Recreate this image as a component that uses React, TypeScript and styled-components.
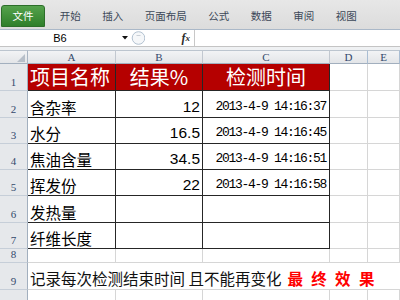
import React from 'react';
import styled, { createGlobalStyle } from 'styled-components';

const CJK = `"Noto Sans CJK SC", "Noto Sans", sans-serif`;

const GlobalStyle = createGlobalStyle`
  *, *::before, *::after { box-sizing: border-box; }
  html, body { margin: 0; padding: 0; background: #fff; }
  body { width: 400px; height: 300px; overflow: hidden; }
  #root { width: 400px; height: 300px; }
`;

const Frame = styled.div`
  width: 400px;
  height: 300px;
  display: flex;
  flex-direction: column;
  overflow: hidden;
  background: #fff;
`;

const Ribbon = styled.div`
  height: 30px;
  flex: none;
  display: flex;
  align-items: flex-end;
  padding: 0 0 2px 1px;
  background: linear-gradient(#e7e7e7, #dcdcdc);
  border-bottom: 1px solid #aab8c8;
`;

const FileTab = styled.div`
  width: 44px;
  height: 22px;
  margin-right: 4px;
  display: flex;
  align-items: center;
  justify-content: center;
  border: 1px solid #2c6e29;
  border-radius: 3px 3px 0 0;
  background: linear-gradient(#55a24c, #2f7f2b);
  color: #fff;
  font: 10.5px/1 ${CJK};
`;

const Tab = styled.div`
  height: 22px;
  padding: 0 10.75px;
  display: flex;
  align-items: center;
  color: #3c4858;
  font: 10.5px/1 ${CJK};
  white-space: nowrap;
`;

const FormulaBar = styled.div`
  height: 17px;
  flex: none;
  display: flex;
  align-items: center;
  background: #fff;
  border-bottom: 1px solid #c4c4c4;
`;

const NameBox = styled.div`
  width: 120px;
  text-align: center;
  font: 11px/16px "Liberation Sans", Arial, sans-serif;
  color: #000;
`;

const DropSlot = styled.div`
  width: 10px;
  height: 16px;
  display: flex;
  align-items: center;
  justify-content: center;
`;

const Toggle = styled.div`
  width: 14px;
  height: 16px;
  margin-left: 1px;
  display: flex;
  align-items: center;
`;

const FxSlot = styled.div`
  width: 49px;
  height: 16px;
  padding-right: 4px;
  display: flex;
  align-items: center;
  justify-content: flex-end;
  font: italic bold 12px/16px "Liberation Serif", "Times New Roman", serif;
  color: #2b2b2b;
`;

const FxSub = styled.span`
  font-size: 9px;
`;

const FormulaInput = styled.div`
  flex: 1;
  height: 16px;
  border-left: 1px solid #c8c8c8;
`;

const Spacer = styled.div`
  height: 3px;
  flex: none;
  background: #eff1f3;
`;

const Sheet = styled.div`
  flex: 1;
  display: grid;
  grid-template-columns: 28px 88px 87px 127px 38px 32px;
  grid-template-rows: 14px 27px 27px 26px 26px 26px 27px 26px 14px 27px 27px;
  overflow: hidden;
`;

const Corner = styled.div`
  display: flex;
  align-items: flex-end;
  justify-content: flex-end;
  padding: 0 2px 1px 0;
  background: linear-gradient(#f2f3f5, #e3e5e8);
  border-top: 1px solid #bcc5cf;
  border-right: 1px solid #a9b5c3;
  border-bottom: 1px solid #a2afbe;
`;

const ColHead = styled.div<{ $blue?: boolean }>`
  display: flex;
  align-items: center;
  justify-content: center;
  background: linear-gradient(#f2f3f5, #e3e5e8);
  border-top: 1px solid #bcc5cf;
  border-right: 1px solid ${(p) => (p.$blue ? '#a9bdd3' : '#c2c8d0')};
  border-bottom: 1px solid #a2afbe;
  font: 11px/12px "Liberation Serif", "Times New Roman", serif;
  color: #33496b;
`;

const RowHead = styled.div`
  display: flex;
  align-items: flex-end;
  justify-content: center;
  padding-bottom: 2px;
  background: #e6e8eb;
  border-right: 1px solid #a2afbe;
  border-bottom: 1px solid #c6ced8;
  font: 11px/12px "Liberation Serif", "Times New Roman", serif;
  color: #33496b;
`;

type Kind = 'title' | 'table' | 'grid';
type Align = 'left' | 'center' | 'right';

const Cell = styled.div<{ $kind: Kind; $align?: Align }>`
  display: flex;
  align-items: ${(p) => (p.$kind === 'title' ? 'center' : 'flex-end')};
  justify-content: ${(p) =>
    p.$align === 'right' ? 'flex-end' : p.$align === 'center' ? 'center' : 'flex-start'};
  padding: 0 2px ${(p) => (p.$kind === 'title' ? '0' : '2px')} 2px;
  white-space: nowrap;
  background: ${(p) => (p.$kind === 'title' ? '#b50000' : '#fff')};
  color: ${(p) => (p.$kind === 'title' ? '#fff' : '#000')};
  border-right: 1px solid ${(p) => (p.$kind === 'grid' ? '#d6d6d6' : '#262626')};
  border-bottom: 1px solid ${(p) => (p.$kind === 'grid' ? '#d6d6d6' : '#262626')};
  font-family: ${CJK};
  font-size: ${(p) => (p.$kind === 'title' ? '20px' : '15.5px')};
  line-height: ${(p) => (p.$kind === 'title' ? '26px' : '16px')};
`;

const NoteCell = styled.div`
  grid-column: 2 / span 5;
  display: flex;
  align-items: flex-end;
  padding: 0 0 3px 2px;
  white-space: nowrap;
  overflow: hidden;
  border-bottom: 1px solid #d6d6d6;
  color: #111;
  font: 15.5px/16px ${CJK};
`;

const Emph = styled.span`
  margin-left: 6px;
  color: #ff0000;
  font-weight: 700;
  letter-spacing: 2.4px;
`;

const Num = styled.span`
  font-family: "Liberation Sans", Arial, sans-serif;
  font-size: 15.5px;
`;

const Stamp = styled.span`
  font-family: "Liberation Mono", "Courier New", monospace;
  font-size: 13px;
  letter-spacing: -1.3px;
  margin-right: 1px;
`;

const tabs = ['开始', '插入', '页面布局', '公式', '数据', '审阅', '视图'];
const cols = ['A', 'B', 'C', 'D', 'E'];

const data: { name: string; value?: string; time?: string }[] = [
  { name: '含杂率', value: '12', time: '2013-4-9 14:16:37' },
  { name: '水分', value: '16.5', time: '2013-4-9 14:16:45' },
  { name: '焦油含量', value: '34.5', time: '2013-4-9 14:16:51' },
  { name: '挥发份', value: '22', time: '2013-4-9 14:16:58' },
  { name: '发热量' },
  { name: '纤维长度' },
];

const GridRest = () => (
  <>
    <Cell $kind="grid" />
    <Cell $kind="grid" />
  </>
);

export default function App() {
  return (
    <Frame>
      <GlobalStyle />
      <Ribbon>
        <FileTab>文件</FileTab>
        {tabs.map((t) => (
          <Tab key={t}>{t}</Tab>
        ))}
      </Ribbon>
      <FormulaBar>
        <NameBox>B6</NameBox>
        <DropSlot>
          <svg width="6" height="4" viewBox="0 0 6 4">
            <polygon points="0,0 6,0 3,3.5" fill="#111" />
          </svg>
        </DropSlot>
        <Toggle>
          <svg width="14" height="16" viewBox="0 0 14 16">
            <circle cx="7.5" cy="8" r="6.3" fill="#f5f7f9" stroke="#b3c2d1" strokeWidth="1" />
            <line x1="5.5" y1="5.5" x2="9.5" y2="5.5" stroke="#c9cfd6" strokeWidth="1" />
          </svg>
        </Toggle>
        <FxSlot>
          f<FxSub>x</FxSub>
        </FxSlot>
        <FormulaInput />
      </FormulaBar>
      <Spacer />
      <Sheet>
        <Corner>
          <svg width="8" height="8" viewBox="0 0 8 8">
            <polygon points="8,0 8,8 0,8" fill="#b7bfc9" />
          </svg>
        </Corner>
        {cols.map((c) => (
          <ColHead key={c} $blue={c === 'D' || c === 'E'}>
            {c}
          </ColHead>
        ))}

        <RowHead>1</RowHead>
        <Cell $kind="title">项目名称</Cell>
        <Cell $kind="title" $align="center">结果%</Cell>
        <Cell $kind="title" $align="center">检测时间</Cell>
        <GridRest />

        {data.map((r, i) => (
          <React.Fragment key={r.name}>
            <RowHead>{i + 2}</RowHead>
            <Cell $kind="table">{r.name}</Cell>
            <Cell $kind="table" $align="right">
              {r.value && <Num>{r.value}</Num>}
            </Cell>
            <Cell $kind="table" $align="right">
              {r.time && <Stamp>{r.time}</Stamp>}
            </Cell>
            <GridRest />
          </React.Fragment>
        ))}

        <RowHead>8</RowHead>
        <Cell $kind="grid" />
        <Cell $kind="grid" />
        <Cell $kind="grid" />
        <GridRest />

        <RowHead>9</RowHead>
        <NoteCell>
          记录每次检测结束时间 且不能再变化<Emph>最 终 效 果</Emph>
        </NoteCell>

        <RowHead />
        <Cell $kind="grid" />
        <Cell $kind="grid" />
        <Cell $kind="grid" />
        <GridRest />
      </Sheet>
    </Frame>
  );
}
